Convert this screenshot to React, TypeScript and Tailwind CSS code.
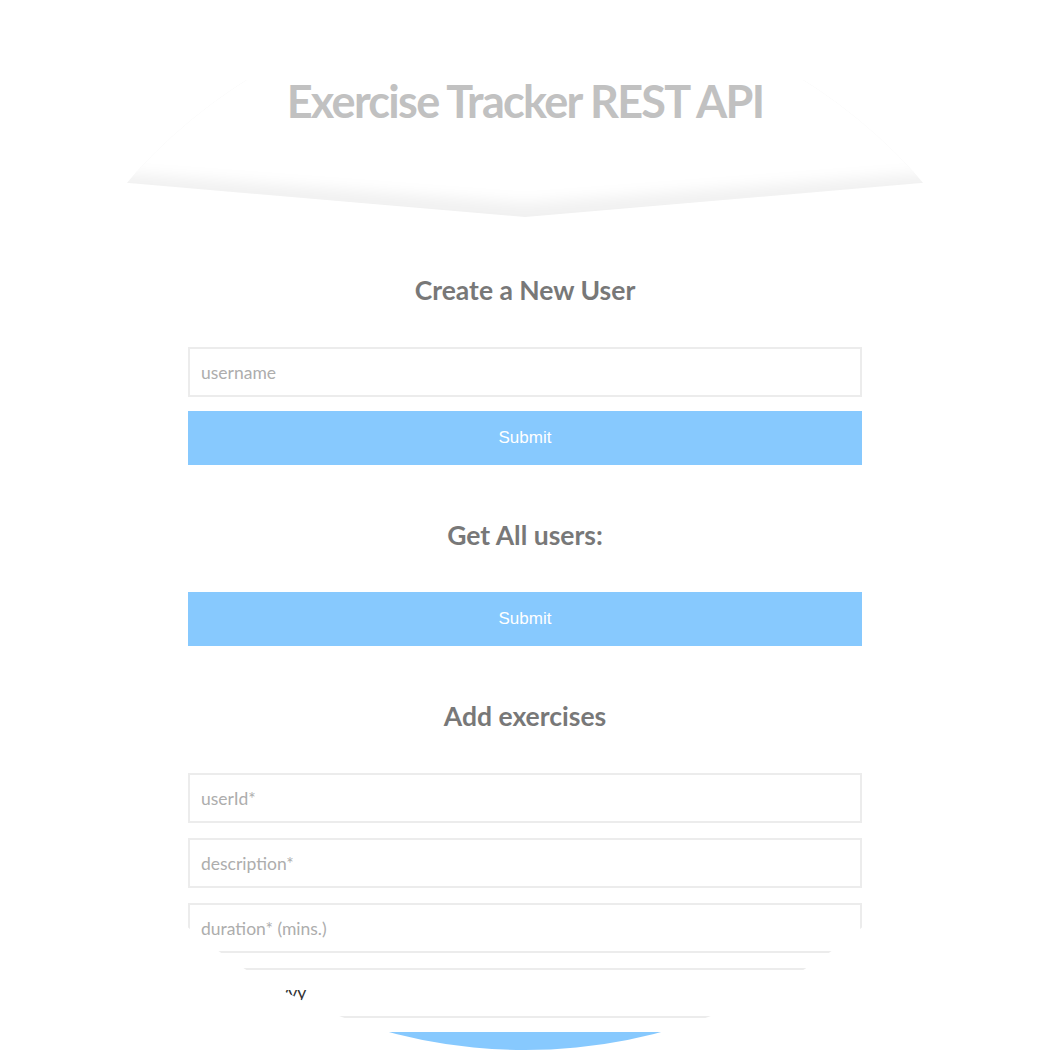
import React from 'react';

const lato = { fontFamily: 'Lato, "Open Sans", sans-serif' };

const SectionTitle: React.FC<{ children: React.ReactNode; first?: boolean }> = ({ children, first }) => (
  <h2
    className={`${first ? 'mt-[56px]' : 'mt-[55px]'} mb-[42px] h-[30px] text-center text-[26.5px] leading-[30px] font-bold text-[#787878]`}
  >
    {children}
  </h2>
);

const Field: React.FC<{ placeholder: string; type?: string }> = ({ placeholder, type = 'text' }) => (
  <input
    type={type}
    placeholder={placeholder}
    className="block w-full h-[50px] border-2 border-[#ececec] bg-white px-[11px] text-[17.5px] text-[#333] placeholder:text-[#adadad] outline-none"
    style={lato}
  />
);

const SubmitButton: React.FC = () => (
  <button
    type="submit"
    className="block w-full h-[54px] mt-[14px] bg-[#87c9fe] text-white text-[17px] font-['Liberation_Sans',Arial,sans-serif]"
  >
    Submit
  </button>
);

const App: React.FC = () => {
  return (
    <div className="w-[1050px] h-[1050px] rounded-full overflow-hidden bg-white" style={lato}>
      {/* Header with chevron bottom */}
      <header className="relative h-[219px]">
        <svg className="absolute left-0 top-[-100px]" width="1050" height="317" viewBox="0 -100 1050 317">
          <defs>
            <filter id="soft" filterUnits="userSpaceOnUse" x="-200" y="-200" width="1450" height="500">
              <feGaussianBlur stdDeviation="7" />
            </filter>
          </defs>
          <polygon points="0,80 1050,80 1050,172 525,217 0,172" fill="#f1f1f1" />
          <polygon points="-80,-180 1130,-180 1130,158 525,203 -80,158" fill="#ffffff" filter="url(#soft)" />
        </svg>
        <h1 className="relative pt-[75px] text-center text-[45px] leading-[52px] font-bold text-[#c1c1c1] tracking-[-1.7px]">
          Exercise Tracker REST API
        </h1>
      </header>

      <main className="w-[674px] mx-auto">
        {/* Create a New User */}
        <form>
          <SectionTitle first>Create a New User</SectionTitle>
          <Field placeholder="username" />
          <SubmitButton />
        </form>

        {/* Get All users */}
        <form>
          <SectionTitle>Get All users:</SectionTitle>
          <SubmitButton />
        </form>

        {/* Add exercises */}
        <form>
          <SectionTitle>Add exercises</SectionTitle>
          <div className="flex flex-col gap-[15px]">
            <Field placeholder="userId*" />
            <Field placeholder="description*" />
            <Field placeholder="duration* (mins.)" />
            <Field placeholder="date (yyyy-mm-dd)" type="date" />
          </div>
          <SubmitButton />
        </form>
      </main>
    </div>
  );
};

export default App;
